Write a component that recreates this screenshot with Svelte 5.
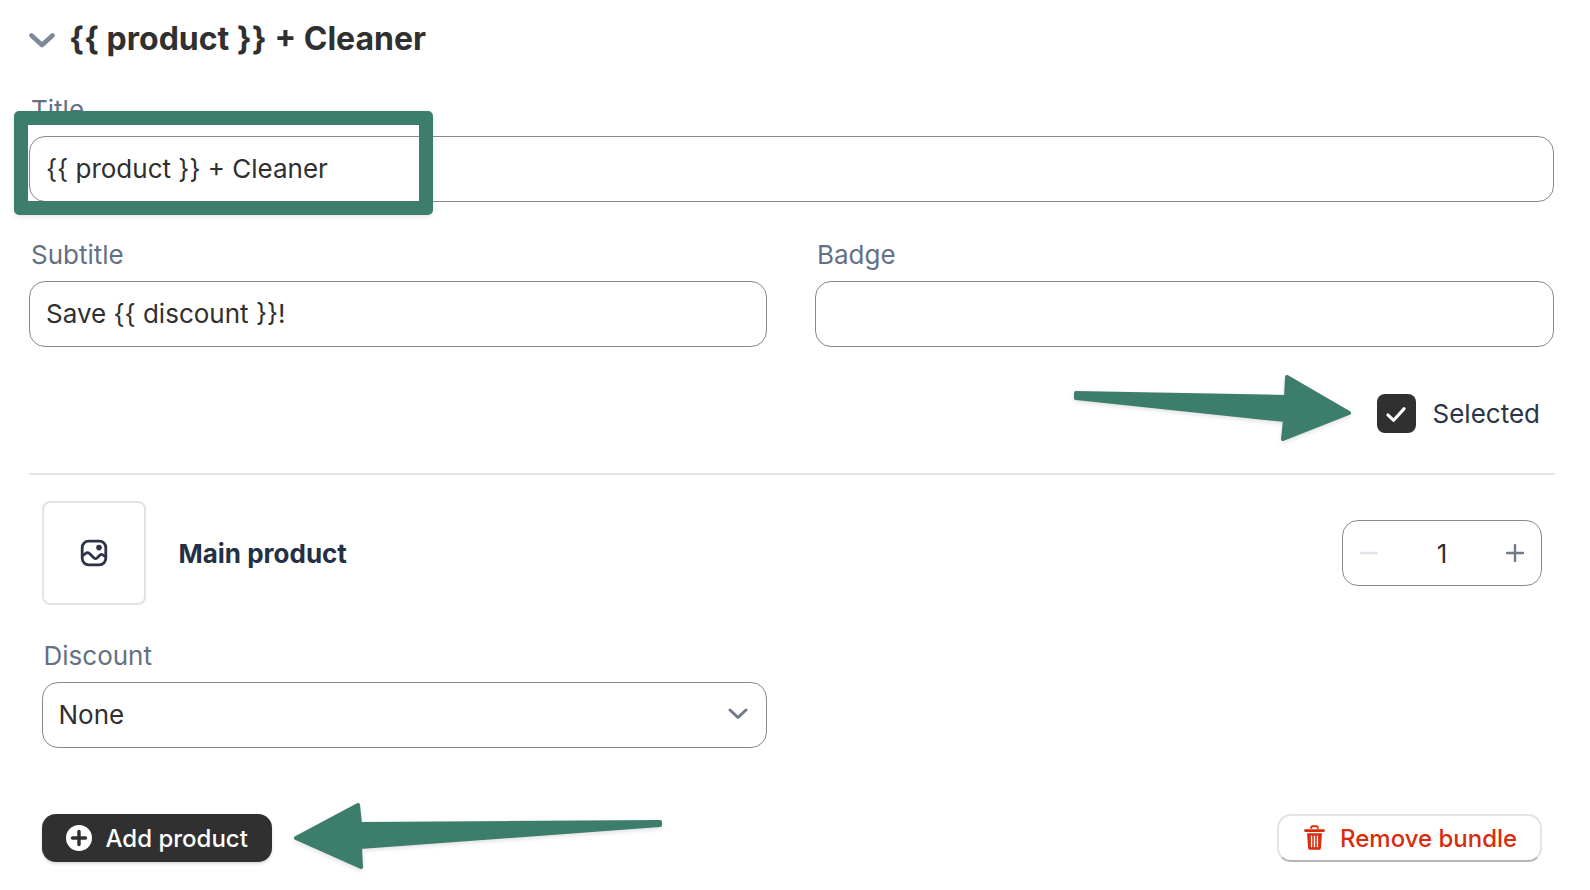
<script>
  // bundle editor card, the green arrows and box are annotations on top
  let title = "{{ product }} + Cleaner";
  let subtitle = "Save {{ discount }}!";
</script>

<div class="page">
  <header class="head">
    <svg class="chev" viewBox="0 0 26 15" width="26" height="15">
      <path d="M2.5 2.5 L13 12 L23.5 2.5" fill="none" stroke="#7d8899" stroke-width="4.6" stroke-linecap="round" stroke-linejoin="round" />
    </svg>
    <h2>{title}</h2>
  </header>

  <div class="group title-group">
    <span class="label">Title</span>
    <div class="field">{title}</div>
  </div>

  <div class="two">
    <div class="group">
      <span class="label">Subtitle</span>
      <div class="field">{subtitle}</div>
    </div>
    <div class="group">
      <span class="label">Badge</span>
      <div class="field"></div>
    </div>
  </div>

  <div class="selected-row">
    <span class="check">
      <svg viewBox="0 0 24 24" width="28" height="28">
        <path d="M5 12.8 L10 17.4 L19 7.4" fill="none" stroke="#fff" stroke-width="2.6" stroke-linecap="round" stroke-linejoin="round" />
      </svg>
    </span>
    <span class="selected-text">Selected</span>
  </div>

  <hr />

  <section class="product">
    <div class="product-row">
      <div class="thumb">
        <svg viewBox="0 0 28 28" width="28" height="28">
          <rect x="2.2" y="2.2" width="23.6" height="23.6" rx="6.5" fill="none" stroke="#2a3446" stroke-width="2.8" />
          <path d="M3 16.5 L5.5 14.5 Q7.5 13 9.5 14.5 L14 19 Q15.5 20.2 17 19 L20 16 Q21.5 14.8 23 16 L25 17.5" fill="none" stroke="#2a3446" stroke-width="2.8" stroke-linecap="round" stroke-linejoin="round" />
          <circle cx="19" cy="8.6" r="2.8" fill="#2a3446" />
        </svg>
      </div>
      <strong class="product-name">Main product</strong>
      <div class="stepper">
        <svg viewBox="0 0 18 18" width="18" height="18">
          <path d="M1 9 H17" stroke="#e0e3e7" stroke-width="2.4" stroke-linecap="round" />
        </svg>
        <span class="qty">1</span>
        <svg viewBox="0 0 18 18" width="18" height="18">
          <path d="M1 9 H17 M9 1 V17" stroke="#6f7a8b" stroke-width="2.4" stroke-linecap="round" />
        </svg>
      </div>
    </div>

    <div class="group discount">
      <span class="label">Discount</span>
      <div class="field select">
        None
        <svg viewBox="0 0 20 12" width="20" height="12">
          <path d="M2 2 L10 9.5 L18 2" fill="none" stroke="#6f7a8b" stroke-width="3" stroke-linecap="round" stroke-linejoin="round" />
        </svg>
      </div>
    </div>

    <div class="actions">
      <button class="add">
        <svg viewBox="0 0 26 26" width="26" height="26">
          <circle cx="13" cy="13" r="13" fill="#fff" />
          <path d="M13 6.5 V19.5 M6.5 13 H19.5" stroke="#303030" stroke-width="3.4" stroke-linecap="round" />
        </svg>
        Add product
      </button>
      <button class="remove">
        <svg viewBox="0 0 24 30" width="21" height="26">
          <path d="M8.2 4.4 V3.2 A1.8 1.8 0 0 1 10 1.4 H14 A1.8 1.8 0 0 1 15.8 3.2 V4.4" fill="none" stroke="#d82c0d" stroke-width="2.2" />
          <path d="M1.5 6.4 H22.5" stroke="#d82c0d" stroke-width="3.2" stroke-linecap="round" />
          <path d="M3.4 9.5 L4.6 26.4 A2.4 2.4 0 0 0 7 28.6 H17 A2.4 2.4 0 0 0 19.4 26.4 L20.6 9.5 Z" fill="#d82c0d" />
          <path d="M8.6 13 V25 M12 13 V25 M15.4 13 V25" stroke="#fff" stroke-width="1.6" stroke-linecap="round" />
        </svg>
        Remove bundle
      </button>
    </div>
  </section>

  <!-- annotations over the ui -->
  <div class="box"></div>
  <svg class="arrows" viewBox="0 0 1590 890" width="1590" height="890">
    <path class="arrow" d="M1076 393 L1286 397 L1287 377 L1349 413 L1283 439 L1285 420 L1076 398 Z" />
    <path class="arrow" d="M660 822 L360 824 L358 805 L296 838 L361 867 L360 847 L660 825 Z" />
  </svg>
</div>

<style>
  :global(body) {
    margin: 0;
    background: #fff;
  }

  .page {
    position: relative;
    width: 1590px;
    height: 890px;
    box-sizing: border-box;
    padding: 15px 36px 0 29px;
    overflow: hidden;
    font-family: Inter, "Liberation Sans", sans-serif;
    color: #303030;
  }

  .head {
    display: flex;
    align-items: center;
    gap: 14px;
    height: 48px;
  }

  .head h2 {
    margin: 0;
    font-size: 32px;
    font-weight: 700;
    line-height: 48px;
    color: #303030;
  }

  .chev {
    margin-top: 3px;
  }

  .group {
    display: flex;
    flex-direction: column;
    gap: 10px;
  }

  .title-group {
    margin-top: 31px;
  }

  .label {
    padding-left: 2px;
    font-size: 26px;
    line-height: 32px;
    color: #647084;
  }

  .field {
    box-sizing: border-box;
    height: 66px;
    padding: 0 16px 2px;
    display: flex;
    align-items: center;
    border: 1px solid #8a8a8a;
    border-radius: 16px;
    font-size: 26px;
    color: #303030;
    background: #fff;
  }

  .two {
    margin-top: 37px;
    display: grid;
    grid-template-columns: 738px 739px;
    gap: 48px;
  }

  .selected-row {
    margin-top: 47px;
    display: flex;
    justify-content: flex-end;
    align-items: center;
    gap: 17px;
    padding-right: 14px;
  }

  .check {
    width: 39px;
    height: 39px;
    border-radius: 8px;
    background: #303030;
    display: flex;
    align-items: center;
    justify-content: center;
  }

  .selected-text {
    font-size: 26px;
    color: #2a3548;
  }

  hr {
    margin: 40px -1px 0 0;
    border: 0;
    border-top: 2px solid #e3e3e3;
  }

  .product {
    padding: 26px 12px 0 12.5px;
  }

  .product-row {
    display: flex;
    align-items: center;
    gap: 33px;
  }

  .thumb {
    box-sizing: border-box;
    width: 104px;
    height: 104px;
    border: 2px solid #e3e3e3;
    border-radius: 8px;
    display: flex;
    align-items: center;
    justify-content: center;
  }

  .product-name {
    flex: 1;
    font-size: 26px;
    font-weight: 700;
    color: #243044;
  }

  .stepper {
    box-sizing: border-box;
    width: 200px;
    height: 66px;
    padding: 0 17px;
    display: flex;
    align-items: center;
    justify-content: space-between;
    border: 1px solid #8a8a8a;
    border-radius: 16px;
  }

  .qty {
    font-size: 26px;
  }

  .discount {
    margin-top: 35px;
    width: 725px;
  }

  .select {
    justify-content: space-between;
    padding-right: 18px;
  }

  .actions {
    margin-top: 66px;
    display: flex;
    justify-content: space-between;
    align-items: center;
  }

  button {
    box-sizing: border-box;
    height: 48px;
    display: flex;
    align-items: center;
    border-radius: 14px;
    font-family: inherit;
    font-size: 24px;
    font-weight: 500;
  }

  .add {
    width: 230px;
    padding: 0 0 0 24px;
    gap: 14px;
    border: 0;
    background: #303030;
    color: #fff;
    box-shadow: 0 2px 3px rgba(0, 0, 0, 0.15);
  }

  .remove {
    width: 265px;
    padding: 0 0 0 25px;
    gap: 15px;
    border: 2px solid #e3e3e3;
    border-bottom-color: #b5b5b5;
    background: #fff;
    color: #d82c0d;
  }

  .box {
    position: absolute;
    left: 14px;
    top: 111px;
    width: 419px;
    height: 104px;
    box-sizing: border-box;
    border: 14px solid #3d7d6b;
    border-radius: 5px;
    box-shadow: 0 2px 5px rgba(0, 0, 0, 0.1);
  }

  .arrows {
    position: absolute;
    left: 0;
    top: 0;
    pointer-events: none;
  }

  .arrow {
    fill: #3d7d6b;
    stroke: #3d7d6b;
    stroke-width: 4;
    stroke-linejoin: round;
    filter: drop-shadow(0 2px 2px rgba(0, 0, 0, 0.12));
  }
</style>
